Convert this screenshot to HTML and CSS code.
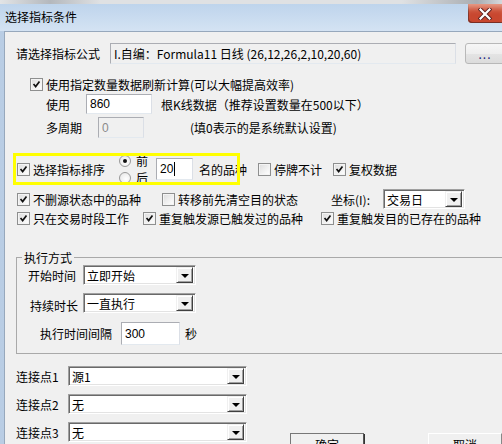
FILE: index.html
```html
<!DOCTYPE html>
<html lang="zh-CN">
<head>
    <meta charset="UTF-8">
    <title>选择指标条件</title>
    <link rel="stylesheet" href="styles.css">
</head>
<body>

<div class="window">
    <div class="top-strip"></div>
    <div class="titlebar">
        <span class="title">选择指标条件</span>
        <div class="win-close">
            <svg width="14" height="12" viewBox="0 0 14 12">
                <path d="M2.5 1.5 L11.5 10.5 M11.5 1.5 L2.5 10.5" stroke="#5a2020" stroke-width="4" stroke-linecap="square"/>
                <path d="M2.5 1.5 L11.5 10.5 M11.5 1.5 L2.5 10.5" stroke="#fff" stroke-width="2.2" stroke-linecap="square"/>
            </svg>
        </div>
    </div>

    <div class="client">
        <!-- 公式 -->
        <div class="row row-formula">
            <span class="lbl w-formula">请选择指标公式</span>
            <div class="textbox readonly formula">I.自编：Formula11 日线 (26,12,26,2,10,20,60)</div>
            <div class="btn dots">...</div>
        </div>

        <div class="row row-refresh">
            <span class="check on"><svg viewBox="0 0 13 13"><path d="M3 6 L5.5 9 L10 3"/></svg></span>
            <span class="cb-text">使用指定数量数据刷新计算(可以大幅提高效率)</span>
        </div>

        <div class="row row-use">
            <span class="lbl w-use">使用</span>
            <div class="textbox count">860</div>
            <span class="hint">根K线数据（推荐设置数量在500以下）</span>
        </div>

        <div class="row row-period">
            <span class="lbl w-period">多周期</span>
            <div class="textbox disabled period">0</div>
            <span class="hint-far">(填0表示的是系统默认设置)</span>
        </div>

        <!-- 排序 -->
        <div class="row row-sort">
            <div class="cb-item w-sort">
                <span class="check on"><svg viewBox="0 0 13 13"><path d="M3 6 L5.5 9 L10 3"/></svg></span>
                <span class="cb-text">选择指标排序</span>
            </div>
            <div class="radio-group">
                <div class="radio-item"><span class="radio on"></span><span>前</span></div>
                <div class="radio-item"><span class="radio"></span><span>后</span></div>
            </div>
            <div class="textbox rank">20<span class="caret"></span></div>
            <span class="rank-text">名的品种</span>
            <div class="cb-item w-halt">
                <span class="check"></span>
                <span class="cb-text">停牌不计</span>
            </div>
            <div class="cb-item">
                <span class="check on"><svg viewBox="0 0 13 13"><path d="M3 6 L5.5 9 L10 3"/></svg></span>
                <span class="cb-text">复权数据</span>
            </div>
            <div class="highlight"></div>
        </div>

        <div class="row row-keep">
            <div class="cb-item w-keep">
                <span class="check on"><svg viewBox="0 0 13 13"><path d="M3 6 L5.5 9 L10 3"/></svg></span>
                <span class="cb-text">不删源状态中的品种</span>
            </div>
            <div class="cb-item w-clear">
                <span class="check"></span>
                <span class="cb-text">转移前先清空目的状态</span>
            </div>
            <span class="lbl w-axis">坐标(I):</span>
            <div class="combo axis">
                <span class="combo-text">交易日</span>
                <span class="combo-btn"><i></i></span>
            </div>
        </div>

        <div class="row row-trade">
            <div class="cb-item w-trade">
                <span class="check on"><svg viewBox="0 0 13 13"><path d="M3 6 L5.5 9 L10 3"/></svg></span>
                <span class="cb-text">只在交易时段工作</span>
            </div>
            <div class="cb-item w-repeat">
                <span class="check on"><svg viewBox="0 0 13 13"><path d="M3 6 L5.5 9 L10 3"/></svg></span>
                <span class="cb-text">重复触发源已触发过的品种</span>
            </div>
            <div class="cb-item">
                <span class="check on"><svg viewBox="0 0 13 13"><path d="M3 6 L5.5 9 L10 3"/></svg></span>
                <span class="cb-text">重复触发目的已存在的品种</span>
            </div>
        </div>

        <!-- 执行方式 -->
        <div class="group">
            <span class="group-title">执行方式</span>
            <div class="row row-start">
                <span class="lbl w-start">开始时间</span>
                <div class="combo run">
                    <span class="combo-text">立即开始</span>
                    <span class="combo-btn"><i></i></span>
                </div>
            </div>
            <div class="row row-last">
                <span class="lbl w-last">持续时长</span>
                <div class="combo run">
                    <span class="combo-text">一直执行</span>
                    <span class="combo-btn"><i></i></span>
                </div>
            </div>
            <div class="row row-interval">
                <span class="lbl w-interval">执行时间间隔</span>
                <div class="textbox interval">300</div>
                <span class="unit">秒</span>
            </div>
        </div>

        <!-- 连接点 -->
        <div class="row row-link first">
            <span class="lbl w-link">连接点1</span>
            <div class="combo link">
                <span class="combo-text">源1</span>
                <span class="combo-btn"><i></i></span>
            </div>
        </div>
        <div class="row row-link">
            <span class="lbl w-link">连接点2</span>
            <div class="combo link">
                <span class="combo-text">无</span>
                <span class="combo-btn"><i></i></span>
            </div>
        </div>
        <div class="row row-link last">
            <span class="lbl w-link">连接点3</span>
            <div class="combo link">
                <span class="combo-text">无</span>
                <span class="combo-btn"><i></i></span>
            </div>
            <div class="btn push ok">确定</div>
            <div class="btn push cancel">取消</div>
        </div>
    </div>
</div>

</body>
</html>
```

FILE: styles.css
```css
body {
    margin: 0;
    background-color: #f0f0f0;
    font-family: "Noto Sans CJK SC", "Liberation Sans", sans-serif;
    font-size: 12px;
    color: #000;
    overflow: hidden;
}

.window {
    width: 502px;
    height: 444px;
    display: flex;
    flex-direction: column;
    background: linear-gradient(90deg, #b9cde4, #c9dcf0 40%, #d3e2f2);
    overflow: hidden;
}

.top-strip {
    height: 4px;
    flex-shrink: 0;
    background: linear-gradient(90deg, #e2e4e6, #b4b8bd 10%, #dfe1e3 20%, #dfe1e3 80%, #a9adb2 95%, #d5d8db);
}

/* Barra de titulo */
.titlebar {
    height: 27px;
    flex-shrink: 0;
    display: flex;
    align-items: flex-start;
    background: linear-gradient(#bed4ec, #d4e3f3);
}

.title {
    flex: 1;
    margin: 5px 0 0 5px;
    font-size: 12px;
    line-height: 16px;
}

.win-close {
    width: 34px;
    height: 19px;
    flex: 0 0 34px;
    display: flex;
    align-items: center;
    justify-content: center;
    background: #c8472f;
    border-radius: 0 0 0 4px;
    box-shadow: inset 0 8px 6px -4px #e8a08c, inset 1px -1px 0 #7a2e24;
}

.client {
    flex: 1;
    margin-left: 4px;
    border-top: 1px solid #97a8bc;
    border-left: 1px solid #97a8bc;
    background-color: #f0f0f0;
    display: flex;
    flex-direction: column;
    overflow: hidden;
}

.row {
    display: flex;
    align-items: center;
    white-space: nowrap;
    flex-shrink: 0;
}

.lbl {
    flex-shrink: 0;
}

/* Campos de texto */
.textbox {
    box-sizing: border-box;
    background-color: #fff;
    border: 1px solid #abadb3;
    border-right-color: #dbdfe6;
    border-bottom-color: #e3e9ef;
    padding: 0 3px;
    display: flex;
    align-items: center;
    font-family: "Liberation Sans", "Noto Sans CJK SC", sans-serif;
    flex-shrink: 0;
}

.textbox.readonly {
    background-color: #f0f0f0;
    font-family: "Noto Sans CJK SC", sans-serif;
}

.textbox.disabled {
    background-color: #f0f0f0;
    color: #8a8a8a;
}

.caret {
    width: 1px;
    height: 14px;
    background-color: #000;
    margin-left: 1px;
}

/* Botoes */
.btn {
    box-sizing: border-box;
    border: 1px solid #8e8f8f;
    border-radius: 3px;
    background: linear-gradient(#f2f2f2, #ebebeb 50%, #dddddd 51%, #cfcfcf);
    display: flex;
    align-items: center;
    justify-content: center;
    flex-shrink: 0;
}

.dots {
    width: 40px;
    height: 21px;
    margin-left: 9px;
    color: #1a237e;
    border-color: #b8b8b8;
    background: linear-gradient(#f6f6f6, #eeeeee 50%, #e4e4e4 51%, #dcdcdc);
    letter-spacing: 1px;
}

.push {
    width: 74px;
    height: 23px;
    align-self: flex-start;
    margin-top: 11px;
    border-radius: 0;
    border-color: #ffffff #555 #555 #ffffff;
    box-shadow: 1px 1px 0 #333;
    background: #f0f0f0;
}

.ok {
    margin-left: 43px;
    border-left-color: #777;
    border-top-color: #777;
}

.cancel {
    margin-left: 64px;
    border-color: #ffffff #888 #888 #ffffff;
    box-shadow: none;
}

/* Checkbox e radio */
.check {
    box-sizing: border-box;
    width: 13px;
    height: 13px;
    border: 1px solid #8e8f8f;
    background: linear-gradient(135deg, #dcdcdc, #f6f6f6 70%, #fff);
    box-shadow: inset 0 0 0 1px #f4f4f4;
    flex-shrink: 0;
    display: flex;
}

.check svg {
    width: 11px;
    height: 11px;
}

.check svg path {
    fill: none;
    stroke: #111;
    stroke-width: 2;
}

.cb-item {
    display: flex;
    align-items: center;
    flex-shrink: 0;
}

.cb-text {
    margin-left: 3px;
}

.radio-group {
    display: flex;
    flex-direction: column;
    width: 37px;
    flex-shrink: 0;
}

.radio-item {
    height: 17px;
    display: flex;
    align-items: center;
}

.radio-item span:last-child {
    margin-left: 5px;
}

.radio {
    box-sizing: border-box;
    width: 12px;
    height: 12px;
    border-radius: 50%;
    border: 1px solid #9a9a9a;
    background: radial-gradient(circle at 60% 60%, #fff, #e4e4e4);
    display: flex;
    align-items: center;
    justify-content: center;
}

.radio.on::after {
    content: '';
    width: 4px;
    height: 4px;
    border-radius: 50%;
    background-color: #111;
}

/* Combobox */
.combo {
    box-sizing: border-box;
    height: 20px;
    border: 1px solid;
    border-color: #a0a0a0 #ffffff #ffffff #a0a0a0;
    box-shadow: inset 1px 1px 0 #696969, inset -1px -1px 0 #e3e3e3;
    background-color: #fff;
    display: flex;
    align-items: center;
    padding: 2px 2px 2px 3px;
    flex-shrink: 0;
}

.combo-text {
    flex: 1;
    overflow: hidden;
}

.combo-btn {
    box-sizing: border-box;
    width: 17px;
    height: 16px;
    background-color: #f0f0f0;
    border: 1px solid;
    border-color: #f0f0f0 #404040 #404040 #f0f0f0;
    box-shadow: inset 1px 1px 0 #ffffff, inset -1px -1px 0 #a0a0a0;
    display: flex;
    align-items: center;
    justify-content: center;
}

.combo-btn i {
    width: 0;
    height: 0;
    border-left: 4px solid transparent;
    border-right: 4px solid transparent;
    border-top: 4px solid #000;
    margin-top: 1px;
}

/* Linhas */
.row-formula {
    margin-top: 11px;
    height: 21px;
    padding-left: 11px;
}

.w-formula { width: 94px; }

.formula {
    width: 346px;
    height: 21px;
}

.row-refresh {
    margin-top: 14px;
    height: 13px;
    padding-left: 25px;
}

.row-use {
    margin-top: 3px;
    height: 20px;
    padding-left: 41px;
}

.w-use { width: 40px; }

.count {
    width: 66px;
    height: 20px;
}

.hint {
    margin-left: 9px;
}

.row-period {
    margin-top: 3px;
    height: 21px;
    padding-left: 41px;
}

.w-period { width: 52px; }

.period {
    width: 46px;
    height: 21px;
}

.hint-far {
    margin-left: 46px;
}

.row-sort {
    position: relative;
    margin-top: 14px;
    height: 34px;
    padding-left: 12px;
}

.w-sort { width: 102px; }

.rank {
    width: 37px;
    height: 22px;
}

.rank-text {
    margin-left: 6px;
    width: 59px;
}

.w-halt { width: 75px; }

.highlight {
    position: absolute;
    left: 8px;
    top: 1px;
    width: 227px;
    height: 32px;
    box-sizing: border-box;
    border: 3px solid #ffff00;
}

.row-keep {
    margin-top: 3px;
    height: 20px;
    padding-left: 12px;
}

.w-keep { width: 145px; }
.w-clear { width: 169px; }
.w-axis { width: 52px; }

.axis {
    width: 82px;
}

.row-trade {
    margin-top: 2px;
    height: 14px;
    padding-left: 12px;
}

.w-trade { width: 126px; }
.w-repeat { width: 178px; }

/* Grupo execucao */
.group {
    margin-top: 32px;
    margin-left: 11px;
    width: 500px;
    flex-shrink: 0;
    border: 1px solid #a9a9a9;
    display: flex;
    flex-direction: column;
    padding-bottom: 8px;
}

.group-title {
    align-self: flex-start;
    margin: -7px 0 0 5px;
    padding: 0 2px;
    line-height: 14px;
    background-color: #f0f0f0;
}

.row-start {
    height: 20px;
    padding-left: 11px;
}

.w-start { width: 55px; }

.run {
    width: 113px;
}

.row-last {
    margin-top: 8px;
    height: 20px;
    padding-left: 13px;
}

.w-last {
    width: 53px;
    margin-top: 4px;
}

.row-interval {
    margin-top: 9px;
    height: 23px;
    padding-left: 23px;
}

.w-interval { width: 81px; }

.interval {
    width: 59px;
    height: 23px;
}

.unit {
    margin-left: 5px;
}

.row-link {
    margin-top: 8px;
    height: 20px;
    padding-left: 11px;
}

.row-link.first {
    margin-top: 12px;
}

.w-link { width: 52px; }

.link {
    width: 179px;
}
```
